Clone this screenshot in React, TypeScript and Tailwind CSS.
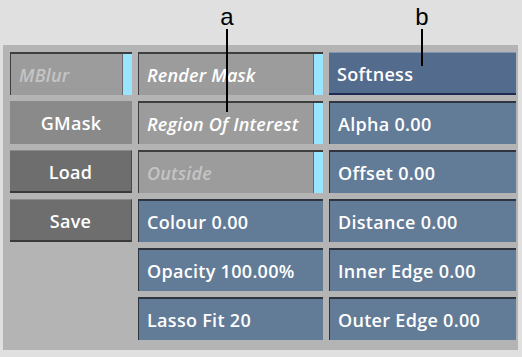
const font = { fontFamily: '"Open Sans", "DejaVu Sans", sans-serif' }

function Toggle({ label, dim }: { label: string; dim?: boolean }) {
  return (
    <div className="flex h-[43px] border-t-2 border-l border-[#3e3e3e] bg-[#9c9c9c]">
      <div
        className={`flex flex-1 items-center pt-[2px] pl-2 text-[18px] font-semibold italic tracking-[0.2px] ${
          dim ? 'text-[#c4c4c4]' : 'text-white'
        }`}
      >
        {label}
      </div>
      <div className="w-[10px] border-l border-[#6a6a6a] bg-[#99e4ff]" />
    </div>
  )
}

function Field({ label }: { label: string }) {
  return (
    <div className="flex h-[43px] items-center border-t-2 border-l border-[#2f3540] bg-[#627b97] pt-[2px] pl-2 text-[18px] font-semibold tracking-[0.3px] text-white">
      {label}
    </div>
  )
}

function Action({ label, flat }: { label: string; flat?: boolean }) {
  return (
    <div
      className={`flex h-[43px] items-center justify-center pt-[2px] text-[18px] font-semibold tracking-[0.3px] text-white ${
        flat
          ? 'bg-[#8a8a8a]'
          : 'border-t border-[#8a8a8a] border-b-2 border-b-[#3a3a3a] border-r border-r-[#4a4a4a] bg-[#6e6e6e]'
      }`}
    >
      {label}
    </div>
  )
}

export default function App() {
  return (
    <div className="relative h-[357px] w-[522px] bg-[#e0e0e0] pt-[45px] pl-[3px]" style={font}>
      <div className="flex h-[305px] w-[515px] gap-[6px] bg-[#b4b4b4] pt-[7px] pl-[7px]">
        <div className="flex w-[122px] flex-col gap-[6px]">
          <Toggle label="MBlur" dim />
          <Action label="GMask" flat />
          <Action label="Load" />
          <Action label="Save" />
        </div>

        <div className="flex w-[185px] flex-col gap-[6px]">
          <Toggle label="Render Mask" />
          <Toggle label="Region Of Interest" />
          <Toggle label="Outside" dim />
          <Field label="Colour 0.00" />
          <Field label="Opacity 100.00%" />
          <Field label="Lasso Fit 20" />
        </div>

        <div className="flex w-[187px] flex-col gap-[6px]">
          <div className="flex h-[43px] items-center border-t border-[#7f95b3] border-b-2 border-b-[#1f2a52] bg-[#536b8c] pt-[2px] pl-2 text-[18px] font-semibold tracking-[0.3px] text-white">
            Softness
          </div>
          <Field label="Alpha 0.00" />
          <Field label="Offset 0.00" />
          <Field label="Distance 0.00" />
          <Field label="Inner Edge 0.00" />
          <Field label="Outer Edge 0.00" />
        </div>
      </div>

      {/* callouts */}
      <div className="absolute left-[219px] top-[4px] flex w-[16px] flex-col items-center">
        <span className="text-[24px] leading-[25px] text-black" style={{ fontFamily: '"Liberation Sans", Arial, sans-serif' }}>
          a
        </span>
        <div className="h-[83px] w-[2px] bg-black" />
      </div>
      <div className="absolute left-[414px] top-[4px] flex w-[16px] flex-col items-center">
        <span className="text-[24px] leading-[25px] text-black" style={{ fontFamily: '"Liberation Sans", Arial, sans-serif' }}>
          b
        </span>
        <div className="h-[37px] w-[2px] bg-black" />
      </div>
    </div>
  )
}
